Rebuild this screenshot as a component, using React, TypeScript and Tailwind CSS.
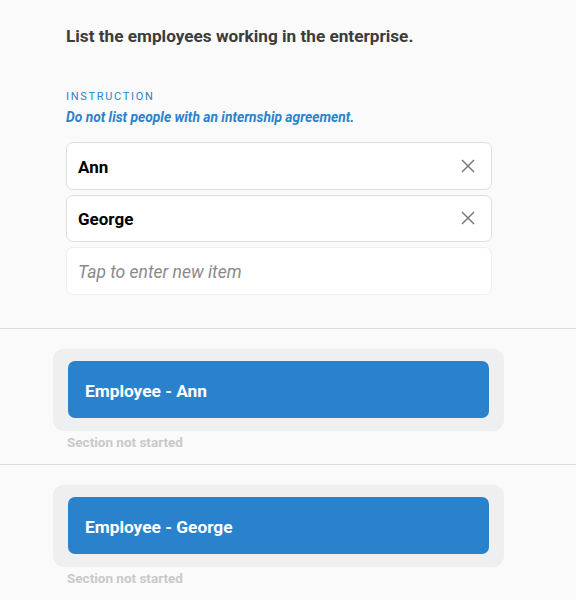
import React from "react";

function XIcon() {
  return (
    <svg width="14" height="14" viewBox="0 0 14 14" fill="none" stroke="#7a7a7a" strokeWidth="1.5" strokeLinecap="square">
      <path d="M1.5 1.5 L12.5 12.5 M12.5 1.5 L1.5 12.5" />
    </svg>
  );
}

function Item({ name }: { name: string }) {
  return (
    <div className="flex h-[47.5px] items-center justify-between rounded-[7px] border border-[#dedede] bg-white pl-[11px] pr-[16px]">
      <span className="pt-[3px] text-[17px] font-bold text-black">{name}</span>
      <XIcon />
    </div>
  );
}

function Section({ title }: { title: string }) {
  return (
    <div className="border-t border-[#dcdcdc] px-[53px] pt-[20px]">
      <div className="w-[451px] rounded-[11px] bg-[#eeeff1] px-[15px] pt-[12px] pb-[13px]">
        <div className="flex h-[57px] items-center rounded-[7px] bg-[#2b82cc] px-[17px] pt-[5px]">
          <span className="text-[17.3px] font-bold text-white">{title}</span>
        </div>
      </div>
      <div className="mt-[3px] pl-[14px] text-[13.5px] font-bold leading-[16px] text-[#c9c9c9]">Section not started</div>
    </div>
  );
}

export default function App() {
  return (
    <div className="min-h-[600px] bg-[#fafafa]" style={{ fontFamily: "Roboto, 'Noto Sans', sans-serif" }}>
      <div className="ml-[66px] w-[426px] pt-[26px] pb-[33px]">
        <div className="text-[17.2px] font-bold leading-5 text-[#3c3c3c]">List the employees working in the enterprise.</div>
        <div className="mt-[44px] text-[11px] leading-[13px] tracking-[1.7px] text-[#2b82cc]">INSTRUCTION</div>
        <div className="mt-[6px] text-[13.8px] font-bold italic leading-[16px] text-[#2b82cc]">Do not list people with an internship agreement.</div>
        <div className="mt-[17px] flex flex-col gap-[5px]">
          <Item name="Ann" />
          <Item name="George" />
          <div className="flex h-[47.5px] items-center rounded-[7px] border border-[#efefef] bg-white pl-[11px]">
            <span className="pt-[3px] text-[17.5px] italic text-[#8a8a8a]">Tap to enter new item</span>
          </div>
        </div>
      </div>
      <Section title="Employee - Ann" />
      <div className="h-[14px]" />
      <Section title="Employee - George" />
    </div>
  );
}
